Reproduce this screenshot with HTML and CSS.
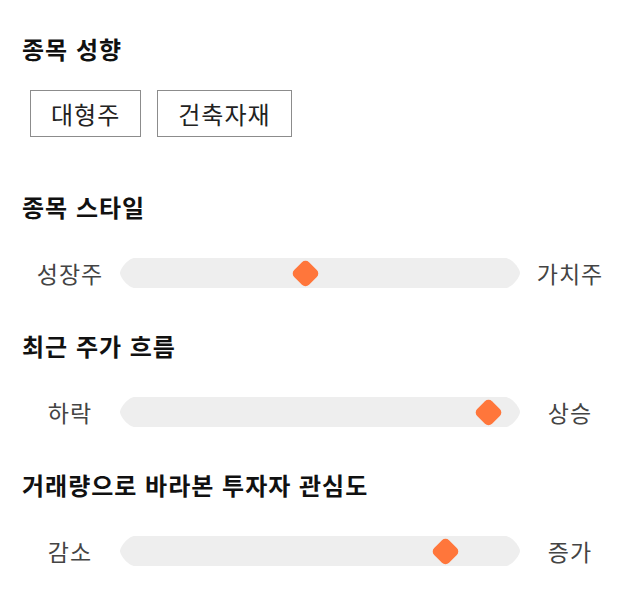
FILE: index.html
```html
<!DOCTYPE html>
<html lang="ko">
<head>
<meta charset="utf-8">
<link rel="stylesheet" href="styles.css">
</head>
<body>
<div class="page">
  <section class="section tendency">
    <h2 class="title">종목 성향</h2>
    <div class="chips">
      <span class="chip">대형주</span>
      <span class="chip">건축자재</span>
    </div>
  </section>
  <section class="section">
    <h2 class="title">종목 스타일</h2>
    <div class="slider">
      <span class="label">성장주</span>
      <div class="track"><span class="thumb" style="left: 46.25%"></span></div>
      <span class="label">가치주</span>
    </div>
  </section>
  <section class="section">
    <h2 class="title">최근 주가 흐름</h2>
    <div class="slider">
      <span class="label">하락</span>
      <div class="track"><span class="thumb" style="left: 92%"></span></div>
      <span class="label">상승</span>
    </div>
  </section>
  <section class="section">
    <h2 class="title">거래량으로 바라본 투자자 관심도</h2>
    <div class="slider">
      <span class="label">감소</span>
      <div class="track"><span class="thumb" style="left: 81.25%"></span></div>
      <span class="label">증가</span>
    </div>
  </section>
</div>
</body>
</html>
```
FILE: styles.css
```css
html, body {
  margin: 0;
  padding: 0;
  background: #ffffff;
}
body {
  font-family: "Noto Sans CJK KR", "Noto Sans", sans-serif;
  color: #111;
}
.page {
  padding: 32px 20px 0 20px;
}
.section {
  margin-bottom: 43px;
}
.tendency {
  margin-bottom: 53px;
}
.title {
  margin: 0 0 33px 2px;
  font-size: 24px;
  line-height: 33px;
  letter-spacing: 1px;
  font-weight: 700;
  color: #111;
}
.tendency .title {
  margin-bottom: 25px;
}
.chips {
  display: flex;
  gap: 16px;
  margin-left: 10px;
}
.chip {
  display: flex;
  align-items: center;
  justify-content: center;
  height: 45px;
  padding: 0 20px;
  border: 1px solid #8c8c8c;
  font-size: 24px;
  letter-spacing: 1px;
  color: #222;
}
.slider {
  display: grid;
  grid-template-columns: 100px 400px 100px;
  align-items: center;
  height: 30px;
}
.label {
  text-align: center;
  font-size: 23px;
  letter-spacing: 1px;
  color: #444;
}
.track {
  position: relative;
  height: 30px;
}
.track::before {
  content: "";
  position: absolute;
  inset: 0;
  background: #eeeeee;
  clip-path: path("M15 0 H385 C392 0 400 11 400 15 C400 19 392 30 385 30 H15 C8 30 0 19 0 15 C0 11 8 0 15 0 Z");
}
.thumb {
  position: absolute;
  top: 50%;
  width: 21px;
  height: 21px;
  margin: -10.5px 0 0 -10.5px;
  background: #ff763b;
  border-radius: 5px;
  transform: rotate(45deg);
}
```
